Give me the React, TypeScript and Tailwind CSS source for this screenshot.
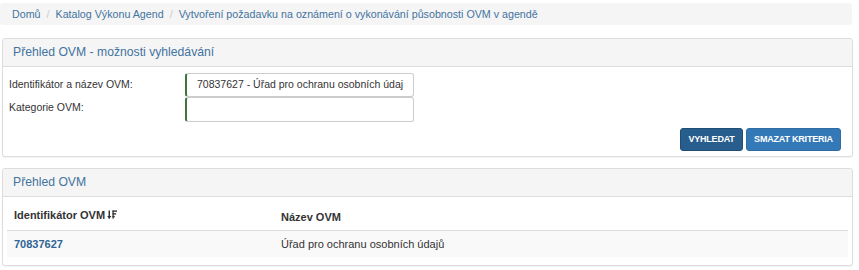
import React from 'react'

const font = { fontFamily: '"Liberation Sans", Arial, sans-serif' }

// Ikona řazení (šipka dolů + pruhy)
function SortIcon() {
  return (
    <svg width="10" height="10" viewBox="0 0 11 11" className="inline-block ml-[2px] -mt-[2px]">
      <path d="M2.5 0.5 V9" stroke="#333" strokeWidth="1.6" />
      <path d="M0.2 6.6 L2.5 10 L4.8 6.6 Z" fill="#333" />
      <rect x="6" y="0.5" width="5" height="1.5" fill="#333" />
      <rect x="6" y="3.5" width="4" height="1.5" fill="#333" />
      <rect x="6" y="6.5" width="2.5" height="1.5" fill="#333" />
      <rect x="6" y="0.5" width="1.4" height="9" fill="#333" />
    </svg>
  )
}

function Panel({ title, children }: { title: string; children: React.ReactNode }) {
  return (
    <div className="ml-[2px] w-[851px] border border-[#dddddd] rounded-[3px] bg-white shadow-[0_1px_1px_rgba(0,0,0,0.05)]">
      <div className="h-[28px] bg-[#f5f5f5] border-b border-[#dddddd] px-[10px] flex items-center text-[12.2px] text-[#43739f] rounded-t-[3px]">
        {title}
      </div>
      {children}
    </div>
  )
}

export default function App() {
  return (
    <div className="w-[859px] h-[270px] bg-white text-[#333] text-[10.5px] overflow-hidden" style={font}>
      {/* Drobečková navigace */}
      <div className="mt-[3px] w-[852px] h-[22px] bg-[#f5f5f5] rounded-[3px] flex items-center pl-[12px] text-[#43739f] text-[10.7px]">
        <span>Domů</span>
        <span className="text-[#cccccc] px-[6px]">/</span>
        <span>Katalog Výkonu Agend</span>
        <span className="text-[#cccccc] px-[6px]">/</span>
        <span>Vytvoření požadavku na oznámení o vykonávání působnosti OVM v agendě</span>
      </div>

      <div className="mt-[13px]">
        <Panel title="Přehled OVM - možnosti vyhledávání">
          <div className="pt-[5px] px-[6px] pb-[5px]">
            <div className="flex items-center h-[25px]">
              <label className="w-[176px] shrink-0">Identifikátor a název OVM:</label>
              <div className="w-[229px] h-[24px] border border-[#cccccc] border-l-2 border-l-[#3c763d] rounded-[3px] flex items-center pl-[10px] overflow-hidden whitespace-nowrap">
                70837627 - Úřad pro ochranu osobních údaj
              </div>
            </div>
            <div className="flex items-center h-[25px]">
              <label className="w-[176px] shrink-0 -mt-[4px]">Kategorie OVM:</label>
              <div className="w-[229px] h-[25px] border border-[#cccccc] border-l-2 border-l-[#3c763d] rounded-[3px]" />
            </div>
            <div className="flex justify-end gap-[3px] mt-[6px] pr-[5px]">
              <button className="w-[63px] h-[23px] bg-[#285e8e] border border-[#204d74] rounded-[3px] text-white text-[9px] font-bold tracking-[-0.2px]">
                VYHLEDAT
              </button>
              <button className="w-[95px] h-[23px] bg-[#3479b7] border border-[#2e6da4] rounded-[3px] text-white text-[9px] font-bold tracking-[-0.2px]">
                SMAZAT KRITERIA
              </button>
            </div>
          </div>
        </Panel>
      </div>

      <div className="mt-[11px]">
        <Panel title="Přehled OVM">
          <div className="px-[4px] pb-[8px]">
            <table className="w-full border-collapse text-[11px]">
              <thead>
                <tr className="h-[33px] border-b border-[#dddddd]">
                  <th className="w-[267px] text-left font-bold pl-[7px] pt-[4px]">
                    Identifikátor OVM<SortIcon />
                  </th>
                  <th className="text-left font-bold pl-[7px] pt-[7px]">Název OVM</th>
                </tr>
              </thead>
              <tbody>
                <tr className="h-[27px] bg-[#f9f9f9]">
                  <td className="pl-[7px] font-bold text-[#2f6496]">70837627</td>
                  <td className="pl-[7px]">Úřad pro ochranu osobních údajů</td>
                </tr>
              </tbody>
            </table>
          </div>
        </Panel>
      </div>
    </div>
  )
}
